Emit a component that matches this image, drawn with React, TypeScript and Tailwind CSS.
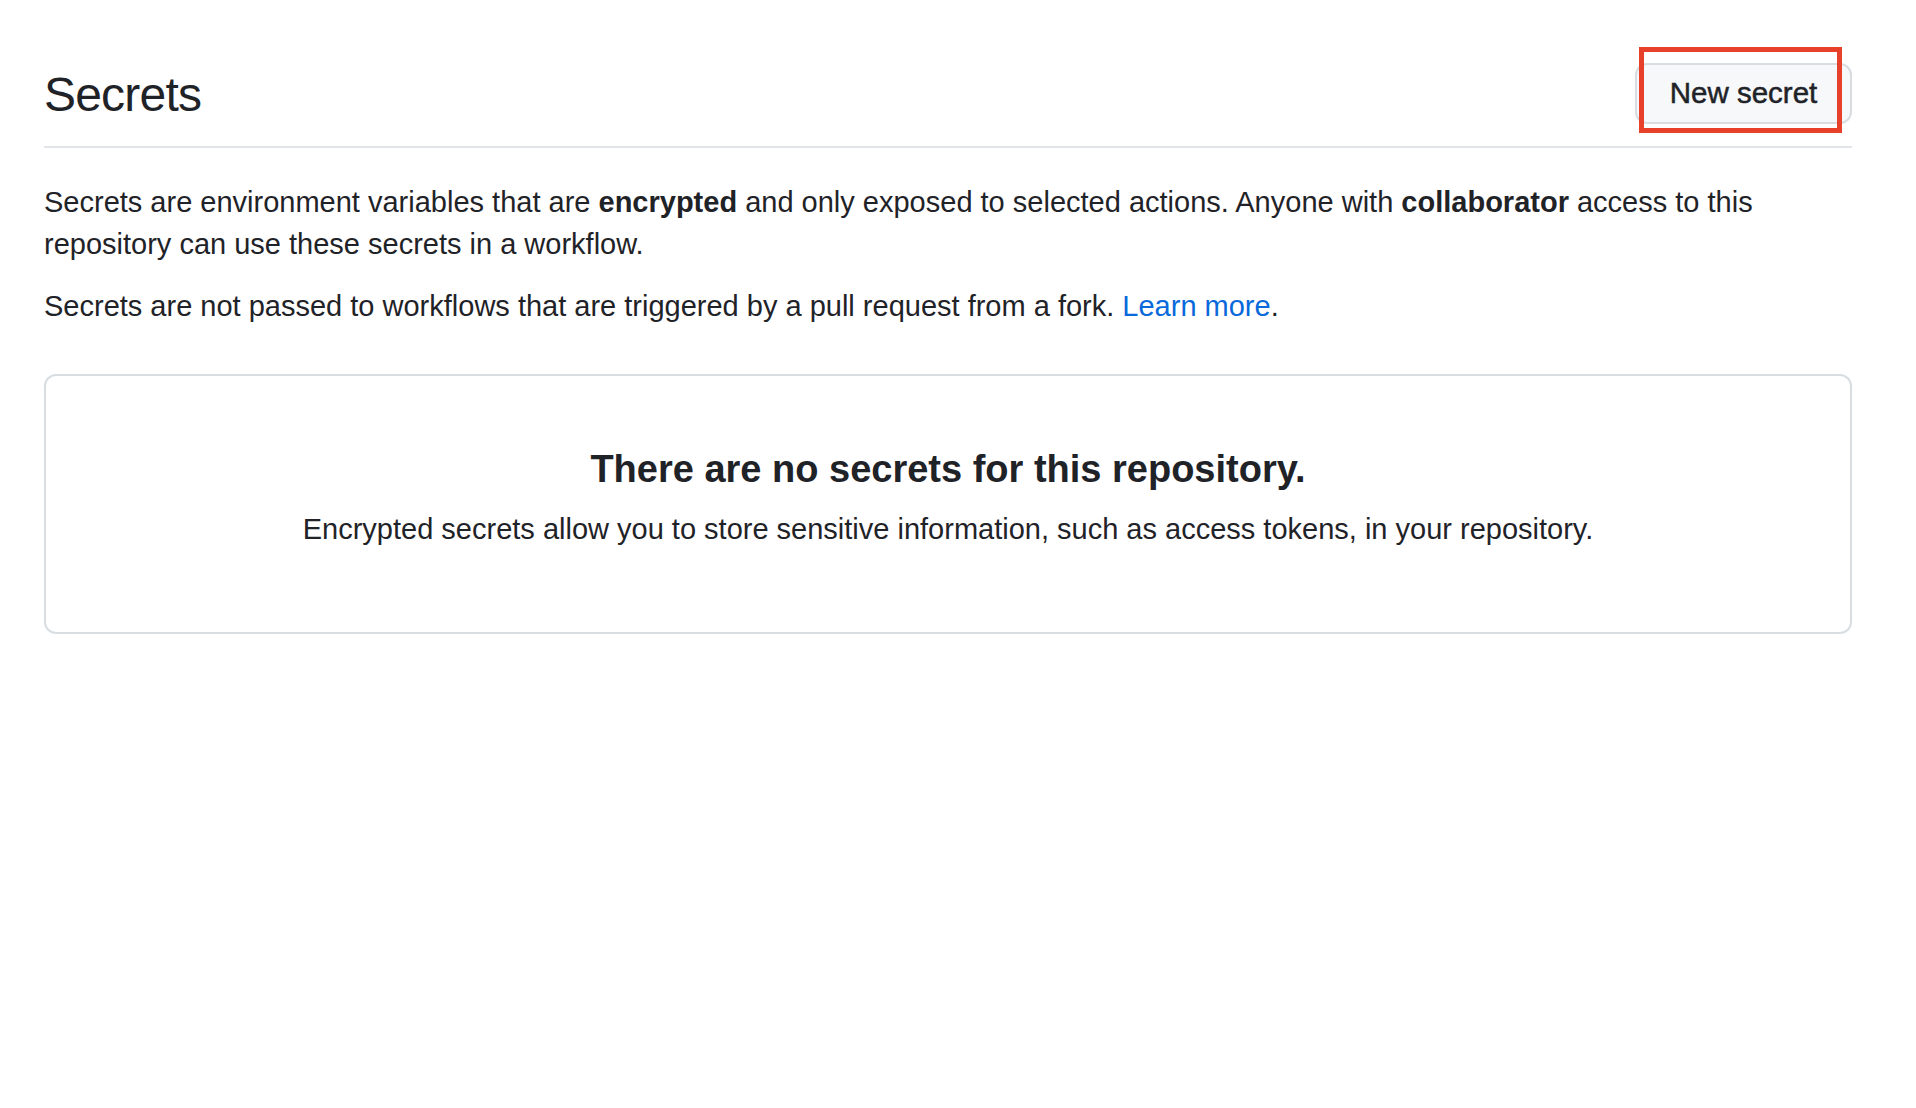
import React from "react";

const font = { fontFamily: '"Liberation Sans", Arial, sans-serif' };

export default function App() {
    return (
        <div className="min-h-screen bg-white text-[#1f2328]" style={font}>
            <div className="pl-[44px] pr-[64px]">
                <div className="flex items-center justify-between pt-[63px] pb-[22px] border-b-2 border-[#e1e4e8]">
                    <h2 className="text-[48px] leading-none font-normal tracking-[-0.8px] pt-[2px]">Secrets</h2>
                    <div className="relative">
                        <button
                            type="button"
                            className="w-[217px] h-[61px] rounded-[12px] border-2 border-[#d8dde2] bg-[#f6f8fa] text-[29.5px] font-medium text-[#1f2328] [-webkit-text-stroke:0.5px_#1f2328] flex items-center justify-center"
                        >
                            New secret
                        </button>
                        <div className="absolute left-[4px] top-[-16px] w-[203px] h-[86px] border-[5px] border-[#e8412b] pointer-events-none" />
                    </div>
                </div>

                <p className="mt-[33px] text-[29px] leading-[42px]">
                    Secrets are environment variables that are <b>encrypted</b> and only exposed to selected actions. Anyone with{" "}
                    <b>collaborator</b> access to this repository can use these secrets in a workflow.
                </p>
                <p className="mt-[20px] text-[29px] leading-[42px]">
                    Secrets are not passed to workflows that are triggered by a pull request from a fork.{" "}
                    <a href="#" className="text-[#0969da]">Learn more</a>.
                </p>

                <div className="mt-[47px] h-[260px] rounded-[12px] border-2 border-[#d8dde2] pt-[65px] text-center">
                    <h3 className="text-[38px] leading-[57px] font-bold">There are no secrets for this repository.</h3>
                    <p className="mt-[10px] text-[29px] leading-[42px]">
                        Encrypted secrets allow you to store sensitive information, such as access tokens, in your repository.
                    </p>
                </div>
            </div>
        </div>
    );
}
